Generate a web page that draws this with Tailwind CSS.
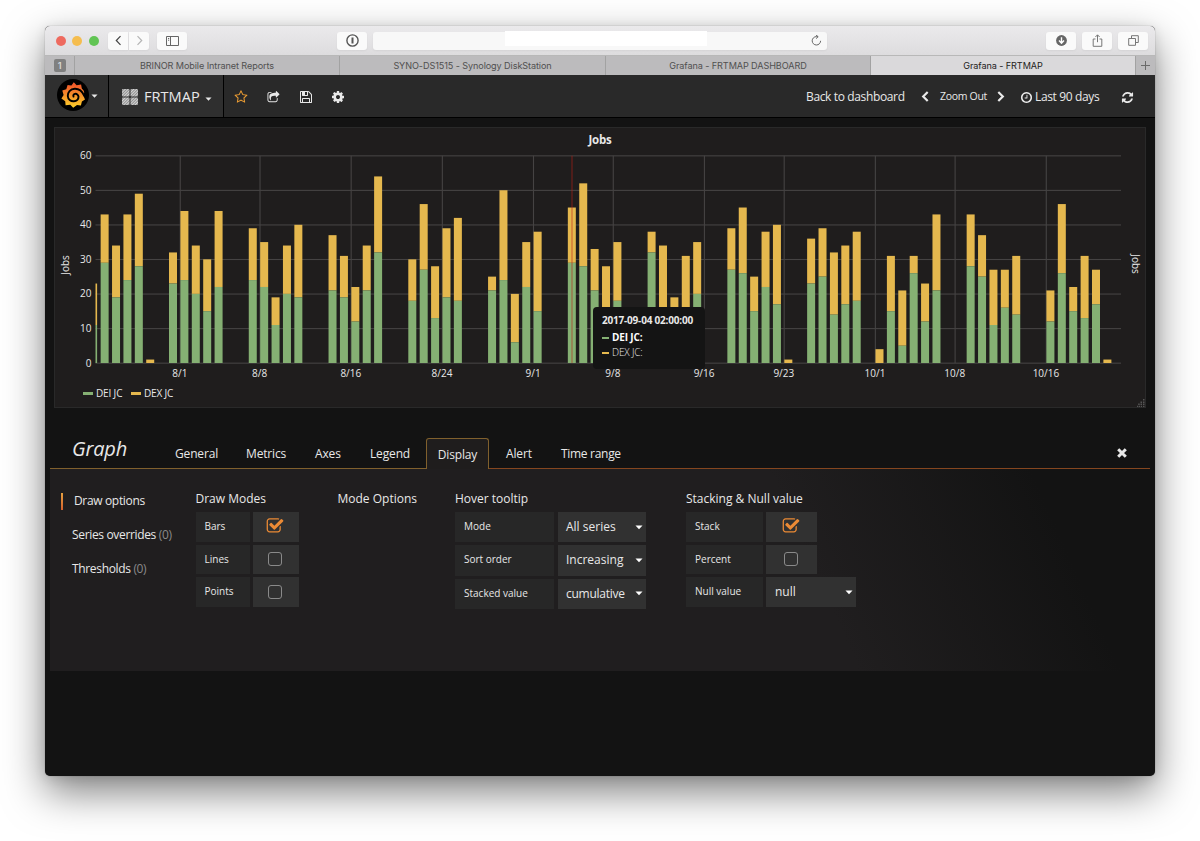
<!DOCTYPE html>
<html lang="en">
<head>
  <meta charset="UTF-8" />
  <meta name="viewport" content="width=device-width, initial-scale=1.0"/>
  <title>Grafana - FRTMAP</title>
  <script src="https://cdn.jsdelivr.net/npm/@tailwindcss/browser@4"></script>
</head>
<body class="h-[841px] overflow-hidden bg-white px-[45px] pt-[26px] font-['Open_Sans',sans-serif] text-[#e8e8e8]">

  <!-- Icon shapes used more than once -->
  <svg class="hidden">
    <symbol id="checked" viewBox="0 0 1792 1792"><path d="M1472 930v318q0 119-84.5 203.5t-203.5 84.5h-832q-119 0-203.5-84.5t-84.5-203.5v-832q0-119 84.5-203.5t203.5-84.5h832q63 0 117 25 15 7 18 23 3 17-9 29l-49 49q-10 10-23 10-3 0-9-2-23-6-45-6h-832q-66 0-113 47t-47 113v832q0 66 47 113t113 47h832q66 0 113-47t47-113v-254q0-13 9-22l64-64q10-10 23-10 6 0 12 3 20 8 20 29zm231-489l-814 814q-24 24-57 24t-57-24l-430-430q-24-24-24-57t24-57l110-110q24-24 57-24t57 24l263 263 647-647q24-24 57-24t57 24l110 110q24 24 24 57t-24 57z"/></symbol>
    <symbol id="caret" viewBox="0 0 8 5"><path d="M0.5 0.5h7L4 4.300z"/></symbol>
  </svg>

  <div class="flex h-[750px] flex-col overflow-hidden rounded-[5px] bg-[#131313] shadow-[0_0_1px_rgba(0,0,0,0.5),0_16px_40px_rgba(0,0,0,0.5),0_2px_12px_rgba(0,0,0,0.1)]">

    <!-- Browser toolbar -->
    <div class="flex h-[30px] shrink-0 items-center border-b border-[#b8b8b8] bg-linear-to-b from-[#ebeaec] to-[#dddcde]">
      <div class="ml-[11px] flex w-[43px] gap-[7px]">
        <span class="size-[10px] rounded-full bg-[#ee6a5f]"></span>
        <span class="-ml-px size-[10px] rounded-full bg-[#f5bd4f]"></span>
        <span class="size-[10px] rounded-full bg-[#61c454]"></span>
      </div>
      <div class="ml-[9px] flex h-[18px] gap-px">
        <span class="flex w-5 items-center justify-center rounded-l-[3px] bg-[#fafafa] shadow-xs">
          <svg class="size-[11px]" viewBox="0 0 11 11" fill="none" stroke="#444" stroke-width="1.2"><path d="M7.500 1.200 3.300 5.500l4.200 4.300"/></svg>
        </span>
        <span class="flex w-5 items-center justify-center rounded-r-[3px] bg-[#fafafa] shadow-xs">
          <svg class="size-[11px]" viewBox="0 0 11 11" fill="none" stroke="#b5b5b5" stroke-width="1.2"><path d="M3.500 1.200 7.700 5.500 3.500 9.800"/></svg>
        </span>
      </div>
      <div class="ml-[8px] flex h-[18px] w-[30px] items-center justify-center rounded-[3px] bg-[#fafafa] shadow-xs">
        <svg class="h-[10px] w-[13px]" viewBox="0 0 13 10" fill="none" stroke="#666" stroke-width="1"><path d="M.5.5h12v9H.5zM4.500.5v9M2 2.500h1.200M2 4.200h1.200"/></svg>
      </div>
      <div class="ml-[150px] flex h-[18px] w-[30px] items-center justify-center rounded-[3px] bg-[#fafafa] shadow-xs">
        <svg class="size-[13px]" viewBox="0 0 13 13" fill="none" stroke="#555"><circle cx="6.500" cy="6.500" r="5.600" stroke-width="1.400"/><path d="M6.500 3.500v6" stroke-width="2"/></svg>
      </div>
      <div class="ml-[6px] flex h-[18px] w-[454px] items-center rounded-[3px] bg-[#f8f8f8] shadow-xs">
        <span class="mb-[4px] ml-[132px] h-[15px] w-[202px] bg-white"></span>
        <svg class="ml-auto mr-[5px] size-[11px]" viewBox="0 0 11 11" fill="none" stroke="#666" stroke-width="1"><path d="M9.600 5.800a4.200 4.200 0 1 1-4.200-4.200h1.400M5 0l2.200 1.700L5 3.600"/></svg>
      </div>
      <div class="ml-auto mr-[7px] flex h-[18px] gap-[6px]">
        <span class="flex w-[30px] items-center justify-center rounded-[3px] bg-[#fafafa] shadow-xs">
          <svg class="size-[11px]" viewBox="0 0 11 11"><circle cx="5.500" cy="5.500" r="5.400" fill="#666"/><path d="M5.500 2.200v5.500M3 5.600l2.500 2.600L8 5.600" fill="none" stroke="#fff" stroke-width="1.400"/></svg>
        </span>
        <span class="flex w-[30px] items-center justify-center rounded-[3px] bg-[#fafafa] shadow-xs">
          <svg class="h-[13px] w-[11px]" viewBox="0 0 11 13" fill="none" stroke="#777"><path d="M3.500 5H1.200v7.300h8.600V5H7.500M5.500 8.200V1M3.400 3l2.100-2.200L7.600 3"/></svg>
        </span>
        <span class="flex w-[30px] items-center justify-center rounded-[3px] bg-[#fafafa] shadow-xs">
          <svg class="size-[11px]" viewBox="0 0 11 11" fill="none" stroke="#777"><path d="M.7 3.500h6.800v6.800H.7zM3.500 3.300V.7h6.800v6.800H7.700"/></svg>
        </span>
      </div>
    </div>

    <!-- Browser tabs -->
    <div class="flex h-[19px] shrink-0 bg-[#bcbbbd] text-center font-[Inter,sans-serif] text-[9.100px] leading-[19px] tracking-[-0.01em] text-[#505050]">
      <div class="flex w-[30px] items-center justify-center border-r border-[#a2a2a2]">
        <span class="h-[13px] w-3 rounded-[2px] bg-[#808080] text-[9px] font-semibold leading-[13px] text-[#d8d8d8]">1</span>
      </div>
      <div class="w-[265px] border-r border-[#a2a2a2]">BRINOR Mobile Intranet Reports</div>
      <div class="w-[266px] border-r border-[#a2a2a2]">SYNO-DS1515 - Synology DiskStation</div>
      <div class="w-[265px] border-r border-[#a2a2a2]">Grafana - FRTMAP DASHBOARD</div>
      <div class="w-[265px] border-r border-[#a2a2a2] bg-[#dad9db] text-[#222]">Grafana - FRTMAP</div>
      <div class="flex flex-1 items-center justify-center">
        <svg class="size-[9px]" viewBox="0 0 9 9" stroke="#6a6a6a"><path d="M4.500 0v9M0 4.500h9"/></svg>
      </div>
    </div>

    <!-- Grafana navbar -->
    <div class="flex h-[43px] shrink-0 items-stretch border-b border-black bg-[#292929]">
      <div class="flex w-[64px] items-center border-r border-black bg-[#2f2f2f] pl-[12px]">
        <svg class="mb-[2px] size-8" viewBox="0 0 32 32">
          <defs><linearGradient id="flame" x1="0" y1="0" x2="0" y2="1"><stop offset=".1" stop-color="#f05a2b"/><stop offset="1" stop-color="#fcd12a"/></linearGradient></defs>
          <circle cx="16" cy="16" r="16" fill="#000"/>
          <path fill="url(#flame)" d="M16.800 3.200 19.600 6.200 24.100 5.600 24.800 9.600Q27.200 11.400 27.200 13.600L26.400 16.800 28 20.500 24.900 22.400 23.900 26.400 20 26 16.200 28.800 13.300 25.800 8.600 26.300 8.200 22.200 4.400 19.600 6.600 16 5.300 11.500 9.300 10.200 10.600 6.100 14.400 6.600z"/>
          <path fill="none" stroke="#000" stroke-width="1.900" stroke-linecap="round" d="M27 16.500C25 11.800 21.500 9.700 17.800 9.800C13.200 10 10.600 13.200 10.800 17C11 20.400 13.700 22.500 16.900 22.300C19.800 22.100 21.700 20.100 21.500 17.700C21.300 15.700 19.600 14.500 17.900 14.900C16.500 15.300 16 16.600 16.500 17.600"/>
        </svg>
        <svg class="ml-[2px] h-[4.500px] w-[7px] fill-[#e8e8e8]"><use href="#caret"/></svg>
      </div>
      <div class="flex w-[115px] items-center border-r border-black bg-[#2f2f2f] pl-[13px] pt-[2px]">
        <svg class="size-4" viewBox="0 0 16 16">
          <defs><pattern id="hatch" width="2" height="2" patternUnits="userSpaceOnUse" patternTransform="rotate(45)"><rect width="2" height="2" fill="#8e8e8e"/><rect width="1" height="2" fill="#d5d5d5"/></pattern></defs>
          <g fill="url(#hatch)"><rect width="7.500" height="7.500" rx="1"/><rect x="8.500" width="7.500" height="7.500" rx="1"/><rect y="8.500" width="7.500" height="7.500" rx="1"/><rect x="8.500" y="8.500" width="7.500" height="7.500" rx="1"/></g>
        </svg>
        <span class="ml-[6px] text-[14.600px]">FRTMAP</span>
        <svg class="ml-[5px] mt-[4px] h-[4.500px] w-[7px] fill-[#e8e8e8]"><use href="#caret"/></svg>
      </div>
      <div class="flex items-center gap-[19.500px] pl-[10px] pt-[2px]">
        <svg class="size-[14px] fill-[#eb9c33]" viewBox="0 0 1792 1792"><path d="M1201 1004l306-297-422-62-189-382-189 382-422 62 306 297-73 421 378-199 377 199zm527-357q0 22-26 48l-363 354 86 500q1 7 1 20 0 50-41 50-19 0-40-12l-449-236-449 236q-22 12-40 12-21 0-31.500-14.500t-10.500-35.500q0-6 2-20l86-500-364-354q-25-27-25-48 0-37 56-46l502-73 225-455q19-41 49-41t49 41l225 455 502 73q56 9 56 46z"/></svg>
        <svg class="-ml-px size-[13px] fill-[#e8e8e8]" viewBox="0 0 1792 1792"><path d="M1472 989v259q0 119-84.500 203.500t-203.500 84.500h-832q-119 0-203.500-84.500t-84.500-203.500v-832q0-119 84.500-203.500t203.500-84.500h255q13 0 22.500 9.500t9.500 22.500q0 27-26 32-77 26-133 60-10 4-16 4h-112q-66 0-113 47t-47 113v832q0 66 47 113t113 47h832q66 0 113-47t47-113v-214q0-19 18-29 28-13 54-37 16-16 35-8 21 9 21 29zm237-496l-384 384q-18 19-45 19-12 0-25-5-39-17-39-59v-192h-160q-323 0-438 131-119 137-74 473 3 23-20 34-8 2-12 2-16 0-26-13-10-14-21-31t-39.500-68.500-49.500-99.500-38.500-114-17.500-122q0-49 3.500-91t14-90 28-88 47-81.500 68.500-74 94.500-61.500 124.500-48.500 159.500-30.500 196.500-11h160v-192q0-42 39-59 13-5 25-5 26 0 45 19l384 384q19 19 19 45t-19 45z"/></svg>
        <svg class="size-[14px] fill-[#e8e8e8]" viewBox="0 0 1792 1792"><path d="M512 1536h768v-384h-768v384zm896 0h128v-896q0-14-10-38.500t-20-34.500l-281-281q-10-10-34-20t-39-10v416q0 40-28 68t-68 28h-576q-40 0-68-28t-28-68v-416h-128v1280h128v-416q0-40 28-68t68-28h832q40 0 68 28t28 68v416zm-384-928v-320q0-13-9.500-22.500t-22.500-9.500h-192q-13 0-22.500 9.500t-9.500 22.500v320q0 13 9.500 22.500t22.500 9.500h192q13 0 22.500-9.500t9.500-22.500zm640 32v928q0 40-28 68t-68 28h-1344q-40 0-68-28t-28-68v-1344q0-40 28-68t68-28h928q40 0 88 20t76 48l280 280q28 28 48 76t20 88z"/></svg>
        <svg class="-ml-[2px] size-[14px] fill-[#e8e8e8]" viewBox="0 0 1792 1792"><path d="M1152 896q0-106-75-181t-181-75-181 75-75 181 75 181 181 75 181-75 75-181zm512-109v222q0 12-8 23t-20 13l-185 28q-19 54-39 91 35 50 107 138 10 12 10 25t-9 23q-27 37-99 108t-94 71q-12 0-26-9l-138-108q-44 23-91 38-16 136-29 186-7 28-36 28h-222q-14 0-24.500-8.500t-11.500-21.500l-28-184q-49-16-90-37l-141 107q-10 9-25 9-14 0-25-11-126-114-165-168-7-10-7-23 0-12 8-23 15-21 51-66.500t54-70.500q-27-50-41-99l-183-27q-13-2-21-12.500t-8-23.500v-222q0-12 8-23t19-13l186-28q14-46 39-92-40-57-107-138-10-12-10-24 0-10 9-23 26-36 98.500-107.500t94.500-71.500q13 0 26 10l138 107q44-23 91-38 16-136 29-186 7-28 36-28h222q14 0 24.500 8.500t11.500 21.500l28 184q49 16 90 37l142-107q9-9 24-9 13 0 25 10 129 119 165 170 7 8 7 22 0 12-8 23-15 21-51 66.500t-54 70.500q26 50 41 98l183 28q13 2 21 12.500t8 23.500z"/></svg>
      </div>
      <div class="ml-auto flex items-center whitespace-nowrap pr-[21px] pt-[2px] text-[12px] tracking-[-0.36px]">
        <span class="w-[99px]">Back to dashboard</span>
        <svg class="mb-[2px] ml-[16px] h-[11px] w-[8px]" viewBox="0 0 8 11" fill="none" stroke="#e8e8e8" stroke-width="2.200"><path d="M6.700 1 2.200 5.500l4.500 4.500"/></svg>
        <span class="mb-px ml-[11px] w-[46px] text-[10.500px] tracking-[-0.3px]">Zoom Out</span>
        <svg class="mb-[2px] ml-[11px] h-[11px] w-[8px]" viewBox="0 0 8 11" fill="none" stroke="#e8e8e8" stroke-width="2.200"><path d="M1.300 1l4.500 4.500L1.300 10"/></svg>
        <svg class="ml-[15px] size-[13px] fill-[#e8e8e8]" viewBox="0 0 1792 1792"><path d="M1024 544v448q0 14-9 23t-23 9h-320q-14 0-23-9t-9-23v-64q0-14 9-23t23-9h224v-352q0-14 9-23t23-9h64q14 0 23 9t9 23zm416 352q0-148-73-273t-198-198-273-73-273 73-198 198-73 273 73 273 198 198 273 73 273-73 198-198 73-273zm224 0q0 209-103 385.500t-279.500 279.500-385.500 103-385.500-103-279.500-279.500-103-385.500 103-385.500 279.500-279.500 385.500-103 385.500 103 279.500 279.500 103 385.500z"/></svg>
        <span class="ml-[2px] w-[66px]">Last 90 days</span>
        <svg class="ml-[20px] size-[13px] fill-[#e8e8e8]" viewBox="0 0 1792 1792"><path d="M1639 1056q0 5-1 7-64 268-268 434.500t-478 166.500q-146 0-282.500-55t-243.500-157l-129 129q-19 19-45 19t-45-19-19-45v-448q0-26 19-45t45-19h448q26 0 45 19t19 45-19 45l-137 137q71 66 161 102t187 36q134 0 250-65t186-179q11-17 53-117 8-23 30-23h192q13 0 22.500 9.500t9.500 22.500zm25-800v448q0 26-19 45t-45 19h-448q-26 0-45-19t-19-45 19-45l138-138q-148-137-349-137-134 0-250 65t-186 179q-11 17-53 117-8 23-30 23h-199q-13 0-22.500-9.500t-9.500-22.500v-7q65-268 270-434.500t480-166.500q146 0 284 55.500t245 156.500l130-129q19-19 45-19t45 19 19 45z"/></svg>
      </div>
    </div>

    <!-- Graph panel -->
    <div class="relative mx-[9px] mt-[9px] h-[281px] shrink-0 border border-[#292929] bg-[#1f1d1d]">
      <div class="h-[23px] pt-[3px] text-center text-[11.500px] font-bold leading-[17px] tracking-[-0.2px]">Jobs</div>
      <svg id="chart" class="h-[232px] w-[1090px] overflow-visible fill-[#e8e8e8] text-[10px]" viewBox="55 151 1090 232"></svg>
      <div class="-mt-px flex items-center pl-[28px] text-[10px] leading-[22px] tracking-[-0.15px]">
        <span class="mr-[3px] h-[3px] w-[10px] bg-[#85b073]"></span><span class="w-[26px] whitespace-nowrap">DEI JC</span>
        <span class="ml-[9px] mr-[3px] h-[3px] w-[10px] bg-[#e5b84e]"></span><span>DEX JC</span>
      </div>
      <div class="absolute left-[538px] top-[179px] h-[62px] w-[112px] whitespace-nowrap rounded-[4px] bg-[#141414] pl-[9px] pt-[6px] text-[10px] leading-[15px]">
        <div class="mb-[2px] text-[10px] font-bold tracking-[-0.2px]">2017-09-04 02:00:00</div>
        <div class="flex items-center font-bold tracking-[-0.15px] text-white"><span class="mr-[3px] h-[2px] w-[7px] bg-[#85b073]"></span>DEI JC:</div>
        <div class="flex items-center font-light tracking-[-0.15px]"><span class="mr-[3px] h-[2px] w-[7px] bg-[#e5b84e]"></span>DEX JC:</div>
      </div>
      <svg class="absolute bottom-0 right-0 size-2 fill-[#555]" viewBox="0 0 8 8"><path d="M6 0h1.500v1.500H6zM3.500 2.500H5V4H3.500zM6 2.500h1.500V4H6zM1.200 4.500h1.500V6H1.200zM3.500 4.500H5V6H3.500zM6 4.500h1.500V6H6zM0 6.700h1.200V8H0zM1.800 6.700h1.200V8H1.800zM3.800 6.700H5V8H3.800zM6 6.700h1.500V8H6z"/></svg>
    </div>

    <!-- Editor tabs -->
    <div class="mx-[5px] mt-[29px] flex h-[32px] shrink-0 text-[12px] tracking-[-0.15px]">
      <div class="flex w-[376px] border-b border-[#80602d]">
        <h2 class="w-[125px] pl-[22px] text-[20px] italic leading-[24px]">Graph</h2>
        <span class="w-[71px] pt-[8px] leading-[18px]">General</span>
        <span class="w-[69px] pt-[8px] leading-[18px]">Metrics</span>
        <span class="w-[55px] pt-[8px] leading-[18px]">Axes</span>
        <span class="pt-[8px] leading-[18px]">Legend</span>
      </div>
      <span class="mt-px w-[63px] rounded-t-[3px] border border-b-0 border-[#80602d] bg-[#1f1d1d] pt-[7px] text-center leading-[18px]">Display</span>
      <div class="flex flex-1 border-b border-[#85461f] pl-[17px]">
        <span class="w-[55px] pt-[8px] leading-[18px]">Alert</span>
        <span class="pt-[8px] leading-[18px] tracking-[-0.3px]">Time range</span>
        <svg class="ml-auto mr-[23px] mt-[11px] size-[10px]" viewBox="0 0 10 10" stroke="#e8e8e8" stroke-width="3"><path d="M1.200 1.200l7.600 7.600M8.800 1.200 1.200 8.800"/></svg>
      </div>
    </div>

    <!-- Display tab -->
    <div class="mx-[5px] flex h-[202px] shrink-0 bg-[linear-gradient(66deg,#201e1f_68%,#131313_90%)] pt-[20px] text-[12px]">
      <div class="w-[145.500px] pl-[11px] leading-[18px] tracking-[-0.34px]">
        <div class="mt-[3px] flex items-center"><span class="mr-[11px] h-[17px] w-[2px] bg-linear-to-b from-[#e5a040] to-[#d4602c]"></span>Draw options</div>
        <div class="mt-[16px] pl-[11px]">Series overrides <span class="text-[#8a8a8a]">(0)</span></div>
        <div class="mt-[16px] pl-[11px]">Thresholds <span class="text-[#8a8a8a]">(0)</span></div>
      </div>

      <div class="w-[142px]">
        <h5 class="h-[23px] leading-[19px]">Draw Modes</h5>
        <div class="grid grid-cols-[54.500px_45.500px] gap-x-[3px] gap-y-[3px] text-[10px] leading-[28px]">
          <div class="h-[29.700px] bg-[#272727] pl-[9px]">Bars</div>
          <div class="flex items-center justify-center bg-[#313131] pb-px pr-px"><svg class="size-[18px] fill-[#eb8a35]"><use href="#checked"/></svg></div>
          <div class="h-[29.700px] bg-[#272727] pl-[9px]">Lines</div>
          <div class="flex items-center justify-center bg-[#313131] pb-px pr-px"><span class="size-[14px] rounded-[3px] border border-[#8a8a8a]"></span></div>
          <div class="h-[29.700px] bg-[#272727] pl-[9px]">Points</div>
          <div class="flex items-center justify-center bg-[#313131] pb-px pr-px"><span class="size-[14px] rounded-[3px] border border-[#8a8a8a]"></span></div>
        </div>
      </div>

      <div class="w-[117.500px]">
        <h5 class="leading-[19px]">Mode Options</h5>
      </div>

      <div class="w-[231px]">
        <h5 class="h-[23px] leading-[19px]">Hover tooltip</h5>
        <div class="grid grid-cols-[99px_88px] gap-x-[4px] gap-y-[3px] text-[10px] leading-[28px]">
          <div class="h-[30.300px] bg-[#272727] pl-[9px]">Mode</div>
          <div class="flex items-center justify-between bg-[#313131] pl-[8px] pr-[3px] text-[12px]">All series<svg class="h-[5px] w-[8px] fill-white"><use href="#caret"/></svg></div>
          <div class="h-[30.300px] bg-[#272727] pl-[9px]">Sort order</div>
          <div class="flex items-center justify-between bg-[#313131] pl-[8px] pr-[3px] text-[12px]">Increasing<svg class="h-[5px] w-[8px] fill-white"><use href="#caret"/></svg></div>
          <div class="h-[30.300px] bg-[#272727] pl-[9px]">Stacked value</div>
          <div class="flex items-center justify-between bg-[#313131] pl-[8px] pr-[3px] text-[12px] tracking-[-0.25px]">cumulative<svg class="h-[5px] w-[8px] fill-white"><use href="#caret"/></svg></div>
        </div>
      </div>

      <div class="w-[171px]">
        <h5 class="h-[23px] leading-[19px]">Stacking &amp; Null value</h5>
        <div class="grid grid-cols-[77px_51px_39px] gap-x-[3px] gap-y-[3px] text-[10px] leading-[28px]">
          <div class="h-[29.700px] bg-[#272727] pl-[9px]">Stack</div>
          <div class="flex items-center justify-center bg-[#313131] pb-px pr-px"><svg class="size-[18px] fill-[#eb8a35]"><use href="#checked"/></svg></div>
          <div class="col-start-1 h-[29.700px] bg-[#272727] pl-[9px]">Percent</div>
          <div class="flex items-center justify-center bg-[#313131] pb-px pr-px"><span class="size-[14px] rounded-[3px] border border-[#8a8a8a]"></span></div>
          <div class="col-start-1 h-[29.700px] bg-[#272727] pl-[9px]">Null value</div>
          <div class="col-span-2 mr-[3px] flex items-center justify-between bg-[#313131] pl-[9px] pr-[3px] text-[12px]">null<svg class="h-[5px] w-[8px] fill-white"><use href="#caret"/></svg></div>
        </div>
      </div>
    </div>
  </div>

  <script>
    // [days since 8/1, DEI JC, stacked total]
    const jobs = [
      [-7,29,43],[-6,19,34],[-5,24,43],[-4,28,49],[-3,0,1],
      [-1,23,32],[0,24,44],[1,20,34],[2,15,30],[3,22,44],
      [6,24,39],[7,22,35],[8,11,19],[9,20,34],[10,19,40],
      [13,21,37],[14,19,31],[15,12,22],[16,21,34],[17,32,54],
      [20,18,30],[21,27,46],[22,13,28],[23,19,39],[24,18,42],
      [27,21,25],[28,24,50],[29,6,20],[30,22,35],[31,15,38],
      [34,29,45],[35,28,52],[36,21,33],[37,12,28],[38,18,35],
      [41,32,38],[42,14,34],[43,9,19],[44,15,31],[45,20,35],
      [48,27,39],[49,26,45],[50,15,25],[51,22,38],[52,17,40],[53,0,1],
      [55,23,36],[56,25,39],[57,14,32],[58,17,34],[59,18,38],
      [61,0,4],[62,15,31],[63,5,21],[64,26,31],[65,12,23],[66,21,43],
      [69,28,43],[70,25,37],[71,11,27],[72,16,27],[73,14,31],
      [76,12,21],[77,26,46],[78,15,22],[79,13,31],[80,17,27],[81,0,1]
    ];
    const ticks = [[0,"8/1"],[7,"8/8"],[15,"8/16"],[23,"8/24"],[31,"9/1"],[38,"9/8"],[46,"9/16"],[53,"9/23"],[61,"10/1"],[68,"10/8"],[76,"10/16"]];
    const x = d => 180.4 + d * 11.395;
    const y = v => 363 - v * 3.455;
    const rect = (left, top, w, h, fill) => `<rect x="${left}" y="${top}" width="${w}" height="${h}" fill="${fill}"/>`;

    let svg = "";
    for (let v = 0; v <= 60; v += 10) {
      svg += rect(95.5, y(v) - 0.4, 1025.5, 1.1, "#454343");
      svg += `<text x="91.5" y="${y(v) + 3.5}" text-anchor="end">${v}</text>`;
    }
    ticks.forEach(([d, label]) => {
      svg += rect(x(d) - 0.7, 155.7, 1.1, 207.3, "#454343");
      svg += `<text x="${x(d) - 0.5}" y="377" text-anchor="middle">${label}</text>`;
    });
    svg += rect(95.5, y(23), 1.6, y(11) - y(23), "#e5b84e") + rect(95.5, y(11), 1.6, 363 - y(11), "#85b073");
    jobs.forEach(([d, dei, total]) => {
      svg += rect(x(d), y(total), 8, y(dei) - y(total), "#e5b84e");
      svg += rect(x(d), y(dei), 8, 363 - y(dei), "#85b073");
    });
    // crosshair
    svg += rect(571.5, 155.7, 1, 207.3, "rgba(190,30,20,0.6)");
    svg += `<text transform="translate(68.5 265) rotate(-90)" text-anchor="middle">Jobs</text>`;
    svg += `<text transform="translate(1131.5 264) rotate(90)" text-anchor="middle">Jobs</text>`;
    document.getElementById("chart").innerHTML = svg;
  </script>
</body>
</html>
